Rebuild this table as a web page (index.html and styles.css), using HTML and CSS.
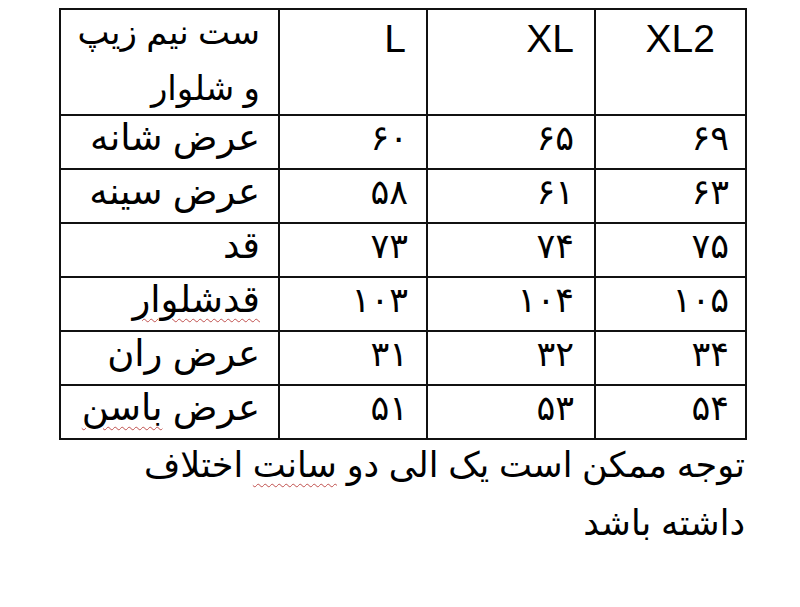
FILE: index.html
```html
<!DOCTYPE html>
<html lang="fa">
<head>
<meta charset="utf-8">
<link rel="stylesheet" href="styles.css">
</head>
<body>
<div class="page">
  <table class="sizes">
    <colgroup>
      <col class="c1"><col class="c2"><col class="c3"><col class="c4">
    </colgroup>
    <tr class="head">
      <td class="label"><div class="title">ست نیم زیپ<br>و شلوار</div></td>
      <td class="size p2">L</td>
      <td class="size p3">XL</td>
      <td class="size p4">XL2</td>
    </tr>
    <tr>
      <td class="label">عرض شانه</td>
      <td class="num p2n">۶۰</td>
      <td class="num p3n">۶۵</td>
      <td class="num p4n">۶۹</td>
    </tr>
    <tr>
      <td class="label">عرض سینه</td>
      <td class="num p2n">۵۸</td>
      <td class="num p3n">۶۱</td>
      <td class="num p4n">۶۳</td>
    </tr>
    <tr>
      <td class="label">قد</td>
      <td class="num p2n">۷۳</td>
      <td class="num p3n">۷۴</td>
      <td class="num p4n">۷۵</td>
    </tr>
    <tr>
      <td class="label"><span class="spell">قدشلوار</span></td>
      <td class="num p2n">۱۰۳</td>
      <td class="num p3n">۱۰۴</td>
      <td class="num p4n">۱۰۵</td>
    </tr>
    <tr>
      <td class="label">عرض ران</td>
      <td class="num p2n">۳۱</td>
      <td class="num p3n">۳۲</td>
      <td class="num p4n">۳۴</td>
    </tr>
    <tr>
      <td class="label">عرض <span class="spell">باسن</span></td>
      <td class="num p2n">۵۱</td>
      <td class="num p3n">۵۳</td>
      <td class="num p4n">۵۴</td>
    </tr>
  </table>
  <p class="note" dir="rtl">توجه ممکن است یک الی دو <span class="spell">سانت</span> اختلاف<br>داشته باشد</p>
</div>
</body>
</html>
```

FILE: styles.css
```css
html, body {
  margin: 0;
  padding: 0;
  background: #ffffff;
}

body {
  font-family: "Liberation Sans", "DejaVu Sans", sans-serif;
  color: #000;
}

.page {
  width: 800px;
  height: 607px;
  padding-top: 8px;
  box-sizing: border-box;
  overflow: hidden;
}

.sizes {
  margin-left: 59px;
  width: 686px;
  border-collapse: collapse;
  table-layout: fixed;
}

.c1 { width: 219px; }
.c2 { width: 148px; }
.c3 { width: 168px; }
.c4 { width: 151px; }

.sizes tr {
  height: 54px;
}

.sizes tr.head {
  height: 106px;
}

.sizes td {
  border: 2px solid #111;
  vertical-align: top;
  text-align: right;
  direction: rtl;
  font-size: 37px;
  line-height: 40px;
  padding: 2px 0 0 0;
}

.sizes .head td {
  padding-top: 7px;
}

.sizes .head td.label {
  padding-top: 0;
}

.label {
  padding-right: 18px !important;
}

.title {
  font-size: 34px;
  line-height: 56px;
  margin: -6px 0 -12px 0;
}

.size {
  direction: ltr !important;
  font-size: 39px !important;
  line-height: 44px !important;
}

.p2 { padding-right: 20px !important; }
.p3 { padding-right: 20px !important; }
.p4 { padding-right: 30px !important; }

.num {
  font-size: 35px !important;
  letter-spacing: 8px;
}

.p2n { padding-right: 18px !important; }
.p3n { padding-right: 20px !important; }
.p4n { padding-right: 16px !important; }

.spell {
  text-decoration: underline wavy #c0504d;
  text-decoration-thickness: 1px;
  text-underline-offset: 6px;
}

.note {
  margin: -4px 0 0 0;
  width: 745px;
  text-align: right;
  font-size: 35px;
  line-height: 58px;
}
```
